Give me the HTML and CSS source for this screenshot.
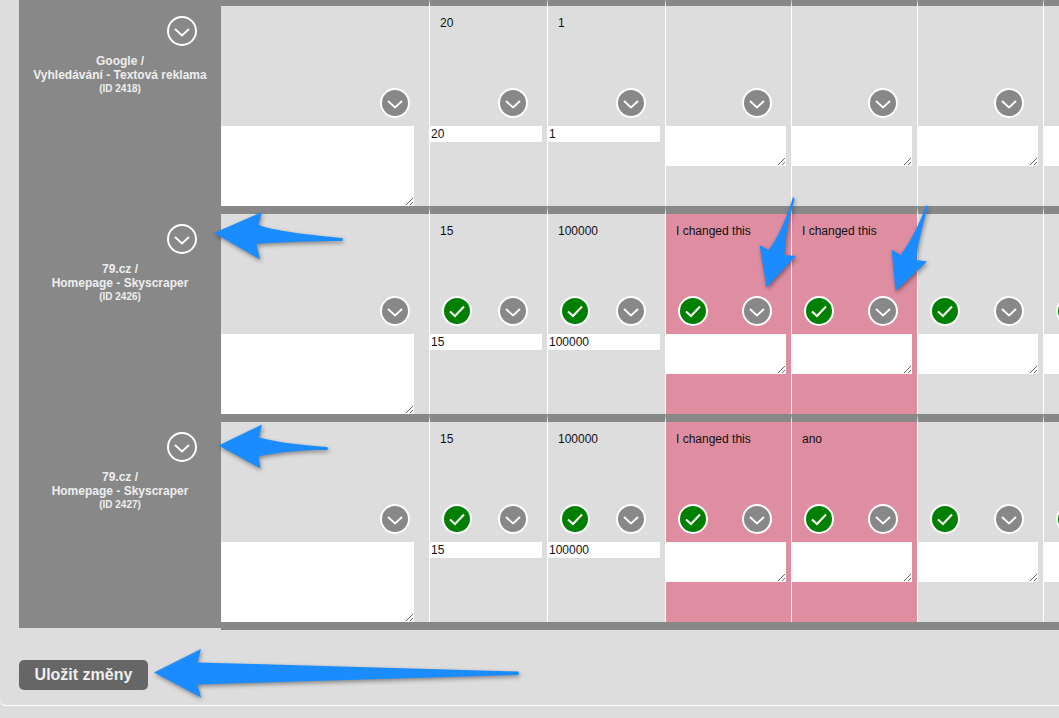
FILE: index.html
```html
<!DOCTYPE html>
<html lang="en">
<head>
    <meta charset="UTF-8">
    <meta name="viewport" content="width=device-width, initial-scale=1.0">
    <title>Změny</title>
    <link rel="stylesheet" href="styles.css">
</head>
<body>
    <svg class="defs" width="0" height="0">
        <symbol id="chevron" viewBox="0 0 30 30">
            <circle cx="15" cy="15" r="14" fill="#888" stroke="#fff" stroke-width="2"/>
            <path d="M8 13 L15 19.5 L22 13" fill="none" stroke="#fff" stroke-width="1.8"/>
        </symbol>
        <symbol id="check" viewBox="0 0 30 30">
            <circle cx="15" cy="15" r="14" fill="#008000" stroke="#fff" stroke-width="2"/>
            <path d="M8 15.5 L13 20 L22 10.5" fill="none" stroke="#fff" stroke-width="2"/>
        </symbol>
        <symbol id="open" viewBox="0 0 30 30">
            <circle cx="15" cy="15" r="14" fill="none" stroke="#fff" stroke-width="2"/>
            <path d="M8 13 L15 19.5 L22 13" fill="none" stroke="#fff" stroke-width="1.8"/>
        </symbol>
    </svg>

    <div class="page">
        <div class="rows">
            <!-- ID 2418 -->
            <div class="row">
                <div class="side">
                    <svg class="icon side-icon"><use href="#open"/></svg>
                    <div class="name">Google /<br>Vyhledávání - Textová reklama</div>
                    <div class="id">(ID 2418)</div>
                </div>
                <div class="cell">
                    <div class="top">
                        <div class="value"></div>
                        <div class="icons end"><svg class="icon"><use href="#chevron"/></svg></div>
                    </div>
                    <textarea class="note wide"></textarea>
                </div>
                <div class="cell">
                    <div class="top">
                        <div class="value">20</div>
                        <div class="icons end"><svg class="icon"><use href="#chevron"/></svg></div>
                    </div>
                    <input class="field" type="text" value="20">
                </div>
                <div class="cell">
                    <div class="top">
                        <div class="value">1</div>
                        <div class="icons end"><svg class="icon"><use href="#chevron"/></svg></div>
                    </div>
                    <input class="field" type="text" value="1">
                </div>
                <div class="cell">
                    <div class="top">
                        <div class="value"></div>
                        <div class="icons end"><svg class="icon"><use href="#chevron"/></svg></div>
                    </div>
                    <textarea class="note"></textarea>
                </div>
                <div class="cell">
                    <div class="top">
                        <div class="value"></div>
                        <div class="icons end"><svg class="icon"><use href="#chevron"/></svg></div>
                    </div>
                    <textarea class="note"></textarea>
                </div>
                <div class="cell">
                    <div class="top">
                        <div class="value"></div>
                        <div class="icons end"><svg class="icon"><use href="#chevron"/></svg></div>
                    </div>
                    <textarea class="note"></textarea>
                </div>
                <div class="cell">
                    <div class="top">
                        <div class="value"></div>
                        <div class="icons end"><svg class="icon"><use href="#chevron"/></svg></div>
                    </div>
                    <textarea class="note"></textarea>
                </div>
            </div>

            <!-- ID 2426 -->
            <div class="row">
                <div class="side">
                    <svg class="icon side-icon"><use href="#open"/></svg>
                    <div class="name">79.cz /<br>Homepage - Skyscraper</div>
                    <div class="id">(ID 2426)</div>
                </div>
                <div class="cell">
                    <div class="top">
                        <div class="value"></div>
                        <div class="icons end"><svg class="icon"><use href="#chevron"/></svg></div>
                    </div>
                    <textarea class="note wide"></textarea>
                </div>
                <div class="cell">
                    <div class="top">
                        <div class="value">15</div>
                        <div class="icons"><svg class="icon"><use href="#check"/></svg><svg class="icon"><use href="#chevron"/></svg></div>
                    </div>
                    <input class="field" type="text" value="15">
                </div>
                <div class="cell">
                    <div class="top">
                        <div class="value">100000</div>
                        <div class="icons"><svg class="icon"><use href="#check"/></svg><svg class="icon"><use href="#chevron"/></svg></div>
                    </div>
                    <input class="field" type="text" value="100000">
                </div>
                <div class="cell changed">
                    <div class="top">
                        <div class="value">I changed this</div>
                        <div class="icons"><svg class="icon"><use href="#check"/></svg><svg class="icon"><use href="#chevron"/></svg></div>
                    </div>
                    <textarea class="note"></textarea>
                </div>
                <div class="cell changed">
                    <div class="top">
                        <div class="value">I changed this</div>
                        <div class="icons"><svg class="icon"><use href="#check"/></svg><svg class="icon"><use href="#chevron"/></svg></div>
                    </div>
                    <textarea class="note"></textarea>
                </div>
                <div class="cell">
                    <div class="top">
                        <div class="value"></div>
                        <div class="icons"><svg class="icon"><use href="#check"/></svg><svg class="icon"><use href="#chevron"/></svg></div>
                    </div>
                    <textarea class="note"></textarea>
                </div>
                <div class="cell">
                    <div class="top">
                        <div class="value"></div>
                        <div class="icons"><svg class="icon"><use href="#check"/></svg><svg class="icon"><use href="#chevron"/></svg></div>
                    </div>
                    <textarea class="note"></textarea>
                </div>
            </div>

            <!-- ID 2427 -->
            <div class="row">
                <div class="side">
                    <svg class="icon side-icon"><use href="#open"/></svg>
                    <div class="name">79.cz /<br>Homepage - Skyscraper</div>
                    <div class="id">(ID 2427)</div>
                </div>
                <div class="cell">
                    <div class="top">
                        <div class="value"></div>
                        <div class="icons end"><svg class="icon"><use href="#chevron"/></svg></div>
                    </div>
                    <textarea class="note wide"></textarea>
                </div>
                <div class="cell">
                    <div class="top">
                        <div class="value">15</div>
                        <div class="icons"><svg class="icon"><use href="#check"/></svg><svg class="icon"><use href="#chevron"/></svg></div>
                    </div>
                    <input class="field" type="text" value="15">
                </div>
                <div class="cell">
                    <div class="top">
                        <div class="value">100000</div>
                        <div class="icons"><svg class="icon"><use href="#check"/></svg><svg class="icon"><use href="#chevron"/></svg></div>
                    </div>
                    <input class="field" type="text" value="100000">
                </div>
                <div class="cell changed">
                    <div class="top">
                        <div class="value">I changed this</div>
                        <div class="icons"><svg class="icon"><use href="#check"/></svg><svg class="icon"><use href="#chevron"/></svg></div>
                    </div>
                    <textarea class="note"></textarea>
                </div>
                <div class="cell changed">
                    <div class="top">
                        <div class="value">ano</div>
                        <div class="icons"><svg class="icon"><use href="#check"/></svg><svg class="icon"><use href="#chevron"/></svg></div>
                    </div>
                    <textarea class="note"></textarea>
                </div>
                <div class="cell">
                    <div class="top">
                        <div class="value"></div>
                        <div class="icons"><svg class="icon"><use href="#check"/></svg><svg class="icon"><use href="#chevron"/></svg></div>
                    </div>
                    <textarea class="note"></textarea>
                </div>
                <div class="cell">
                    <div class="top">
                        <div class="value"></div>
                        <div class="icons"><svg class="icon"><use href="#check"/></svg><svg class="icon"><use href="#chevron"/></svg></div>
                    </div>
                    <textarea class="note"></textarea>
                </div>
            </div>

            <div class="table-end">
                <div class="side-end"></div>
                <div class="bar-end"></div>
            </div>
        </div>

        <button class="save" type="button">Uložit změny</button>
    </div>

    <!-- annotation arrows over the screenshot -->
    <svg class="arrows" width="1059" height="718" viewBox="0 0 1059 718">
        <path d="M214 233 L262 212 L258.5 225 C275 231 310 235 342 238 Q344 239.500 342 241 C315 241 280 242 256.500 244 L260 259.500 Z"/>
        <path d="M218.500 445.500 L262 424.500 L259 437.500 C275 442 300 445 327 447 Q329 448.500 327 450 C305 450 280 451.500 258.500 456.500 L260.500 468.500 Z"/>
        <path d="M154 672.500 L201 649 L197.500 662.500 L518 671.500 Q520 673 518 675 L197.500 684.500 L201 697.500 Z"/>
        <path d="M793 197 Q795 198 794.500 200 C790 215 785 235 784.500 255 L796 256 L766.500 287.500 L759.500 245 L768.500 250 C778 238 788 215 793 197 Z"/>
        <path d="M926.500 205 Q928 206 927.500 208 C923 225 917 245 916.500 260 L927 261.500 L895.500 291 L891.500 249.500 L900.500 255 C910 243 920 222 926.500 205 Z"/>
    </svg>
</body>
</html>
```

FILE: styles.css
```css
html, body {
    height: 100%;
}

body {
    margin: 0;
    background-color: #ddd;
    font-family: 'Liberation Sans', Arial, sans-serif;
    font-size: 12px;
    color: #111;
    overflow: hidden;
}

.defs {
    display: block;
    height: 0;
}

.page {
    height: 706px;
    box-sizing: border-box;
    padding-left: 19px;
    border-bottom: 1px solid #fff;
    border-radius: 0 0 0 6px;
    overflow: hidden;
}

.rows {
    margin-top: -2px;
    width: 1300px;
}

.row {
    display: grid;
    grid-template-columns: 202px 209px 118px 118px 126px 126px 126px 126px;
    height: 208px;
}

.side {
    background-color: #888;
    color: #eee;
    text-align: center;
    font-weight: bold;
    padding-top: 18px;
}

.icon {
    display: block;
    width: 30px;
    height: 30px;
}

.side-icon {
    margin: 0 0 8px 148px;
}

.name {
    line-height: 14px;
}

.id {
    font-size: 10px;
    line-height: 14px;
}

.cell {
    border-top: 8px solid #888;
    border-right: 1px solid #fff;
    min-width: 0;
}

.changed {
    background-color: #de8ea0;
}

.top {
    height: 120px;
    box-sizing: border-box;
    display: flex;
    flex-direction: column;
    justify-content: space-between;
    padding-top: 10px;
}

.value {
    padding-left: 10px;
    line-height: 14px;
}

.icons {
    display: flex;
    justify-content: space-between;
    padding: 0 19px 8px 12px;
}

.icons.end {
    justify-content: flex-end;
}

.note {
    display: block;
    width: 120px;
    height: 40px;
    box-sizing: border-box;
    border: none;
    padding: 1px;
    margin: 0;
    background-color: #fff;
    font-family: inherit;
    font-size: 12px;
    outline: none;
}

.note.wide {
    width: 193px;
    height: 80px;
}

.field {
    display: block;
    width: 112px;
    height: 16px;
    box-sizing: border-box;
    border: none;
    padding: 0 1px;
    margin: 0;
    background-color: #fff;
    font-family: inherit;
    font-size: 12px;
    color: #111;
    outline: none;
}

.table-end {
    display: flex;
    align-items: flex-start;
}

.side-end {
    width: 202px;
    height: 6px;
    background-color: #888;
}

.bar-end {
    flex: 1;
    height: 8px;
    background-color: #888;
}

.save {
    display: block;
    margin-top: 30px;
    width: 129px;
    height: 30px;
    padding: 0;
    border: none;
    border-radius: 5px;
    background-color: #666;
    color: #eee;
    font-family: inherit;
    font-size: 16px;
    font-weight: bold;
}

.arrows {
    position: absolute;
    top: 0;
    left: 0;
    pointer-events: none;
    fill: #1a8cff;
    filter: drop-shadow(1px 2px 2px rgba(0, 0, 0, 0.4));
}
```
